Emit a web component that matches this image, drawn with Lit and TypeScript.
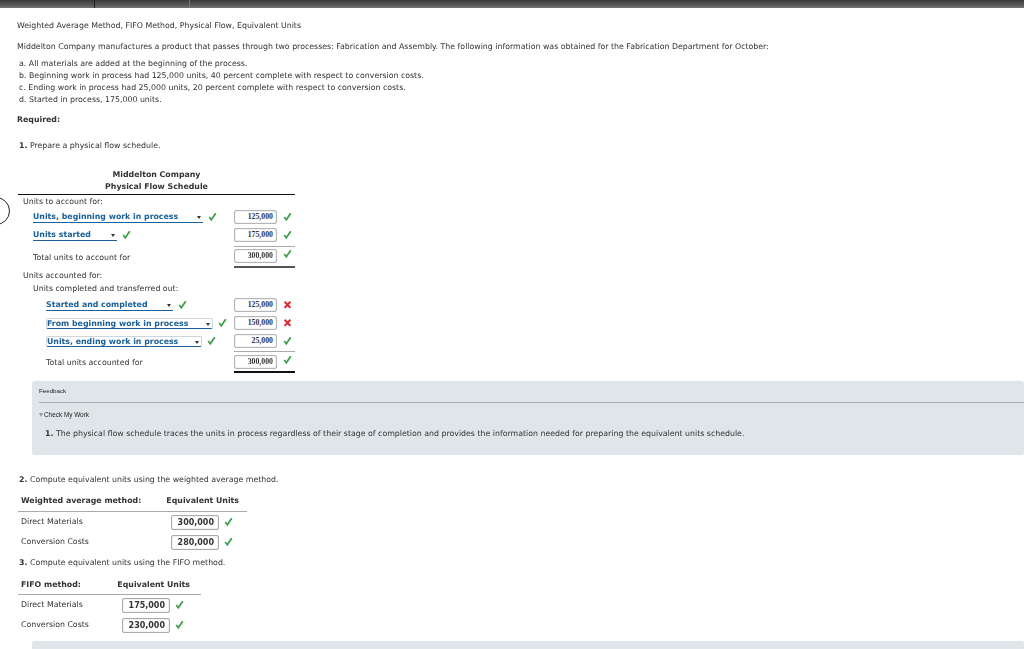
import { LitElement, html, css } from 'lit';
import { customElement } from 'lit/decorators.js';

type Mark = 'ok' | 'bad';

const check = html`<svg class="mark" viewBox="0 0 10 10" width="9" height="10"><path d="M1.4 5 L3.7 8 L8.6 .8" fill="none" stroke="#3f9f4c" stroke-width="2"/></svg>`;
const cross = html`<svg class="mark" viewBox="0 0 10 10" width="9" height="10"><path d="M1.8 1.4 L8.2 8.2 M8.2 1.4 L1.8 8.2" fill="none" stroke="#dd2330" stroke-width="2.2"/></svg>`;
const markOf = (m: Mark) => (m === 'ok' ? check : cross);

@customElement('app-root')
export class AppRoot extends LitElement {
  static styles = css`
    :host {
      display: block;
      position: relative;
      height: 649px;
      overflow: hidden;
      background: #fff;
      color: #333;
      font-family: 'DejaVu Sans', Verdana, sans-serif;
      font-size: 7.83px;
      line-height: 12px;
    }

    .topbar {
      display: flex;
      height: 8px;
      background: linear-gradient(#3a3a3a, #5c5c5c 70%, #777);
    }
    .topbar span { width: 94px; border-right: 1px solid #222; }
    .topbar span + span { border-right-color: #777; }

    /* the reference is a soft, rescaled capture */
    .content { padding: 12px 0 0 17px; filter: blur(0.3px); }
    .title { height: 12px; }
    .intro { margin-top: 9px; height: 12px; }
    .list { margin: 5px 0 0 2px; line-height: 12px; }
    .required { margin-top: 8px; font-weight: bold; }
    .step { margin: 14px 0 0 2px; }

    .schedule { margin: 17px 0 0 1px; width: 277px; }
    .sched-head {
      text-align: center;
      font-weight: bold;
      border-bottom: 1px solid #111;
      padding-bottom: 1px;
    }
    .heading-a { margin-top: 1px; }
    .heading-b { margin-top: 2px; }
    .heading-c { margin: 1px 0; }

    .row {
      display: grid;
      grid-template-columns: 216px 43px 18px;
      align-items: center;
    }
    .pick { height: 18px; }
    .lead { display: flex; align-items: center; gap: 5px; }
    .in0 { padding-left: 5px; }
    .in1 { padding-left: 15px; }
    .in2 { padding-left: 28px; }
    .sum-label { padding-top: 2px; }

    .select {
      position: relative;
      box-sizing: border-box;
      height: 11px;
      line-height: 10px;
      color: #1b6098;
      font-weight: bold;
      border-bottom: 1px solid #1b6098;
      white-space: nowrap;
    }
    .select.outlined {
      border: 1px solid #ccd6de;
      border-bottom: 1px solid #1b6098;
      border-radius: 2px;
      line-height: 9px;
    }
    .select::after {
      content: '';
      position: absolute;
      right: 2px;
      top: 4px;
      border: 2.5px solid transparent;
      border-top: 3px solid #333;
      border-bottom: 0;
    }

    .amount {
      box-sizing: border-box;
      height: 14px;
      border: 1px solid #b5b5b5;
      border-radius: 2px;
      box-shadow: inset 0 0 1px #888;
      background: #fff;
      text-align: right;
      padding-right: 3px;
      font: bold 7.8px/12px 'Liberation Serif', 'Times New Roman', serif;
      color: #333;
    }
    .markcell { padding-left: 6px; display: flex; }
    .mark { display: block; }

    .sumcell { grid-column: 2 / 4; }
    .sum-wrap {
      display: flex;
      border-top: 1px solid #aaa;
      border-bottom: 2px solid #555;
      padding: 2px 0 3px;
    }
    .sum-wrap.black { border-bottom-color: #111; padding: 3px 0 2px; }
    .sum-wrap .amount { width: 43px; }

    .panel {
      background: #dfe6e9;
      border-radius: 3px;
      margin-left: 15px;
      box-sizing: border-box;
    }
    .feedback { margin-top: 8px; height: 74px; padding: 5px 0 0 7px; }
    .fb-label { font: 6.2px/10px 'Liberation Sans', Arial, sans-serif; color: #222; height: 16px; }
    .fb-rule { border-top: 1px solid #a9b0b3; }
    .fb-check { font: 6.4px/10px 'Liberation Sans', Arial, sans-serif; color: #222; margin-top: 7px; }
    .fb-check i {
      display: inline-block;
      border: 2.5px solid transparent;
      border-top: 4px solid #999;
      border-bottom: 0;
      margin-right: 1px;
    }
    .fb-text { margin: 8px 0 0 6px; }

    .after { margin: 19px 0 0 2px; }

    .eq { margin: 9px 0 0 1px; }
    .eq-head {
      display: grid;
      grid-template-columns: 1fr 80px;
      font-weight: bold;
      height: 16px;
      padding: 0 8px 0 3px;
      border-bottom: 1px solid #aaa;
    }
    .eq-head span:last-child { text-align: right; }
    .eq-row { display: flex; align-items: center; height: 20px; padding-left: 3px; }
    .eq-name { flex: none; }
    .eq-box {
      box-sizing: border-box;
      width: 48px;
      height: 15px;
      border: 1px solid #aaa;
      border-radius: 2px;
      box-shadow: inset 0 0 1px #888;
      text-align: right;
      padding-right: 4px;
      font-size: 8px;
      font-weight: bold;
      line-height: 13px;
    }
    .eq-row .mark { margin-left: 5px; }
    .wa { width: 229px; }
    .wa .eq-name { width: 150px; }
    .fifo { width: 183px; margin-top: 10px; }
    .fifo .eq-head { height: 15px; padding-right: 11px; }
    .fifo .eq-name { width: 101px; }
    .third { margin: 5px 0 0 2px; }
    .cut { margin-top: 6px; height: 30px; padding: 5px 0 0 7px; }

    .annotation {
      position: absolute;
      left: -18px;
      top: 197px;
      width: 26px;
      height: 26px;
      border: 1.5px solid #222;
      border-radius: 50%;
    }
  `;

  private _scheduleRow(indent: string, label: string, width: number, amount: string, sel: Mark, amt: Mark, outlined = false) {
    return html`
      <div class="row pick">
        <div class="lead ${indent}">
          <div class="select ${outlined ? 'outlined' : ''}" style="width:${width}px">${label}</div>
          ${markOf(sel)}
        </div>
        <div class="amount">${amount}</div>
        <div class="markcell">${markOf(amt)}</div>
      </div>
    `;
  }

  private _sumRow(indent: string, label: string, amount: string, black: boolean) {
    return html`
      <div class="row">
        <div class="${indent} sum-label">${label}</div>
        <div class="sumcell">
          <div class="sum-wrap ${black ? 'black' : ''}">
            <div class="amount">${amount}</div>
            <div class="markcell">${check}</div>
          </div>
        </div>
      </div>
    `;
  }

  private _eqRow(name: string, value: string) {
    return html`
      <div class="eq-row">
        <div class="eq-name">${name}</div>
        <div class="eq-box">${value}</div>
        ${check}
      </div>
    `;
  }

  render() {
    return html`
      <div class="topbar"><span></span><span></span></div>
      <div class="content">
        <div class="title">Weighted Average Method, FIFO Method, Physical Flow, Equivalent Units</div>
        <div class="intro">Middelton Company manufactures a product that passes through two processes: Fabrication and Assembly. The following information was obtained for the Fabrication Department for October:</div>
        <div class="list">
          <div>a. All materials are added at the beginning of the process.</div>
          <div>b. Beginning work in process had 125,000 units, 40 percent complete with respect to conversion costs.</div>
          <div>c. Ending work in process had 25,000 units, 20 percent complete with respect to conversion costs.</div>
          <div>d. Started in process, 175,000 units.</div>
        </div>
        <div class="required">Required:</div>
        <div class="step"><b>1.</b> Prepare a physical flow schedule.</div>

        <div class="schedule">
          <div class="sched-head"><div>Middelton Company</div><div>Physical Flow Schedule</div></div>
          <div class="in0 heading-a">Units to account for:</div>
          ${this._scheduleRow('in1', 'Units, beginning work in process', 170, '125,000', 'ok', 'ok')}
          ${this._scheduleRow('in1', 'Units started', 84, '175,000', 'ok', 'ok')}
          <div class="heading-b">${this._sumRow('in1', 'Total units to account for', '300,000', false)}</div>
          <div class="in0 heading-b">Units accounted for:</div>
          <div class="in1 heading-c">Units completed and transferred out:</div>
          ${this._scheduleRow('in2', 'Started and completed', 127, '125,000', 'ok', 'bad')}
          ${this._scheduleRow('in2', 'From beginning work in process', 167, '150,000', 'ok', 'bad', true)}
          ${this._scheduleRow('in2', 'Units, ending work in process', 156, '25,000', 'ok', 'ok', true)}
          <div class="heading-a">${this._sumRow('in2', 'Total units accounted for', '300,000', true)}</div>
        </div>

        <div class="panel feedback">
          <div class="fb-label">Feedback</div>
          <div class="fb-rule"></div>
          <div class="fb-check"><i></i>Check My Work</div>
          <div class="fb-text"><b>1.</b> The physical flow schedule traces the units in process regardless of their stage of completion and provides the information needed for preparing the equivalent units schedule.</div>
        </div>

        <div class="after"><b>2.</b> Compute equivalent units using the weighted average method.</div>
        <div class="eq wa">
          <div class="eq-head"><span>Weighted average method:</span><span>Equivalent Units</span></div>
          ${this._eqRow('Direct Materials', '300,000')}
          ${this._eqRow('Conversion Costs', '280,000')}
        </div>
        <div class="third"><b>3.</b> Compute equivalent units using the FIFO method.</div>
        <div class="eq fifo">
          <div class="eq-head"><span>FIFO method:</span><span>Equivalent Units</span></div>
          ${this._eqRow('Direct Materials', '175,000')}
          ${this._eqRow('Conversion Costs', '230,000')}
        </div>
        <div class="panel cut"><div class="fb-label">Feedback</div></div>
      </div>
      <div class="annotation"></div>
    `;
  }
}
